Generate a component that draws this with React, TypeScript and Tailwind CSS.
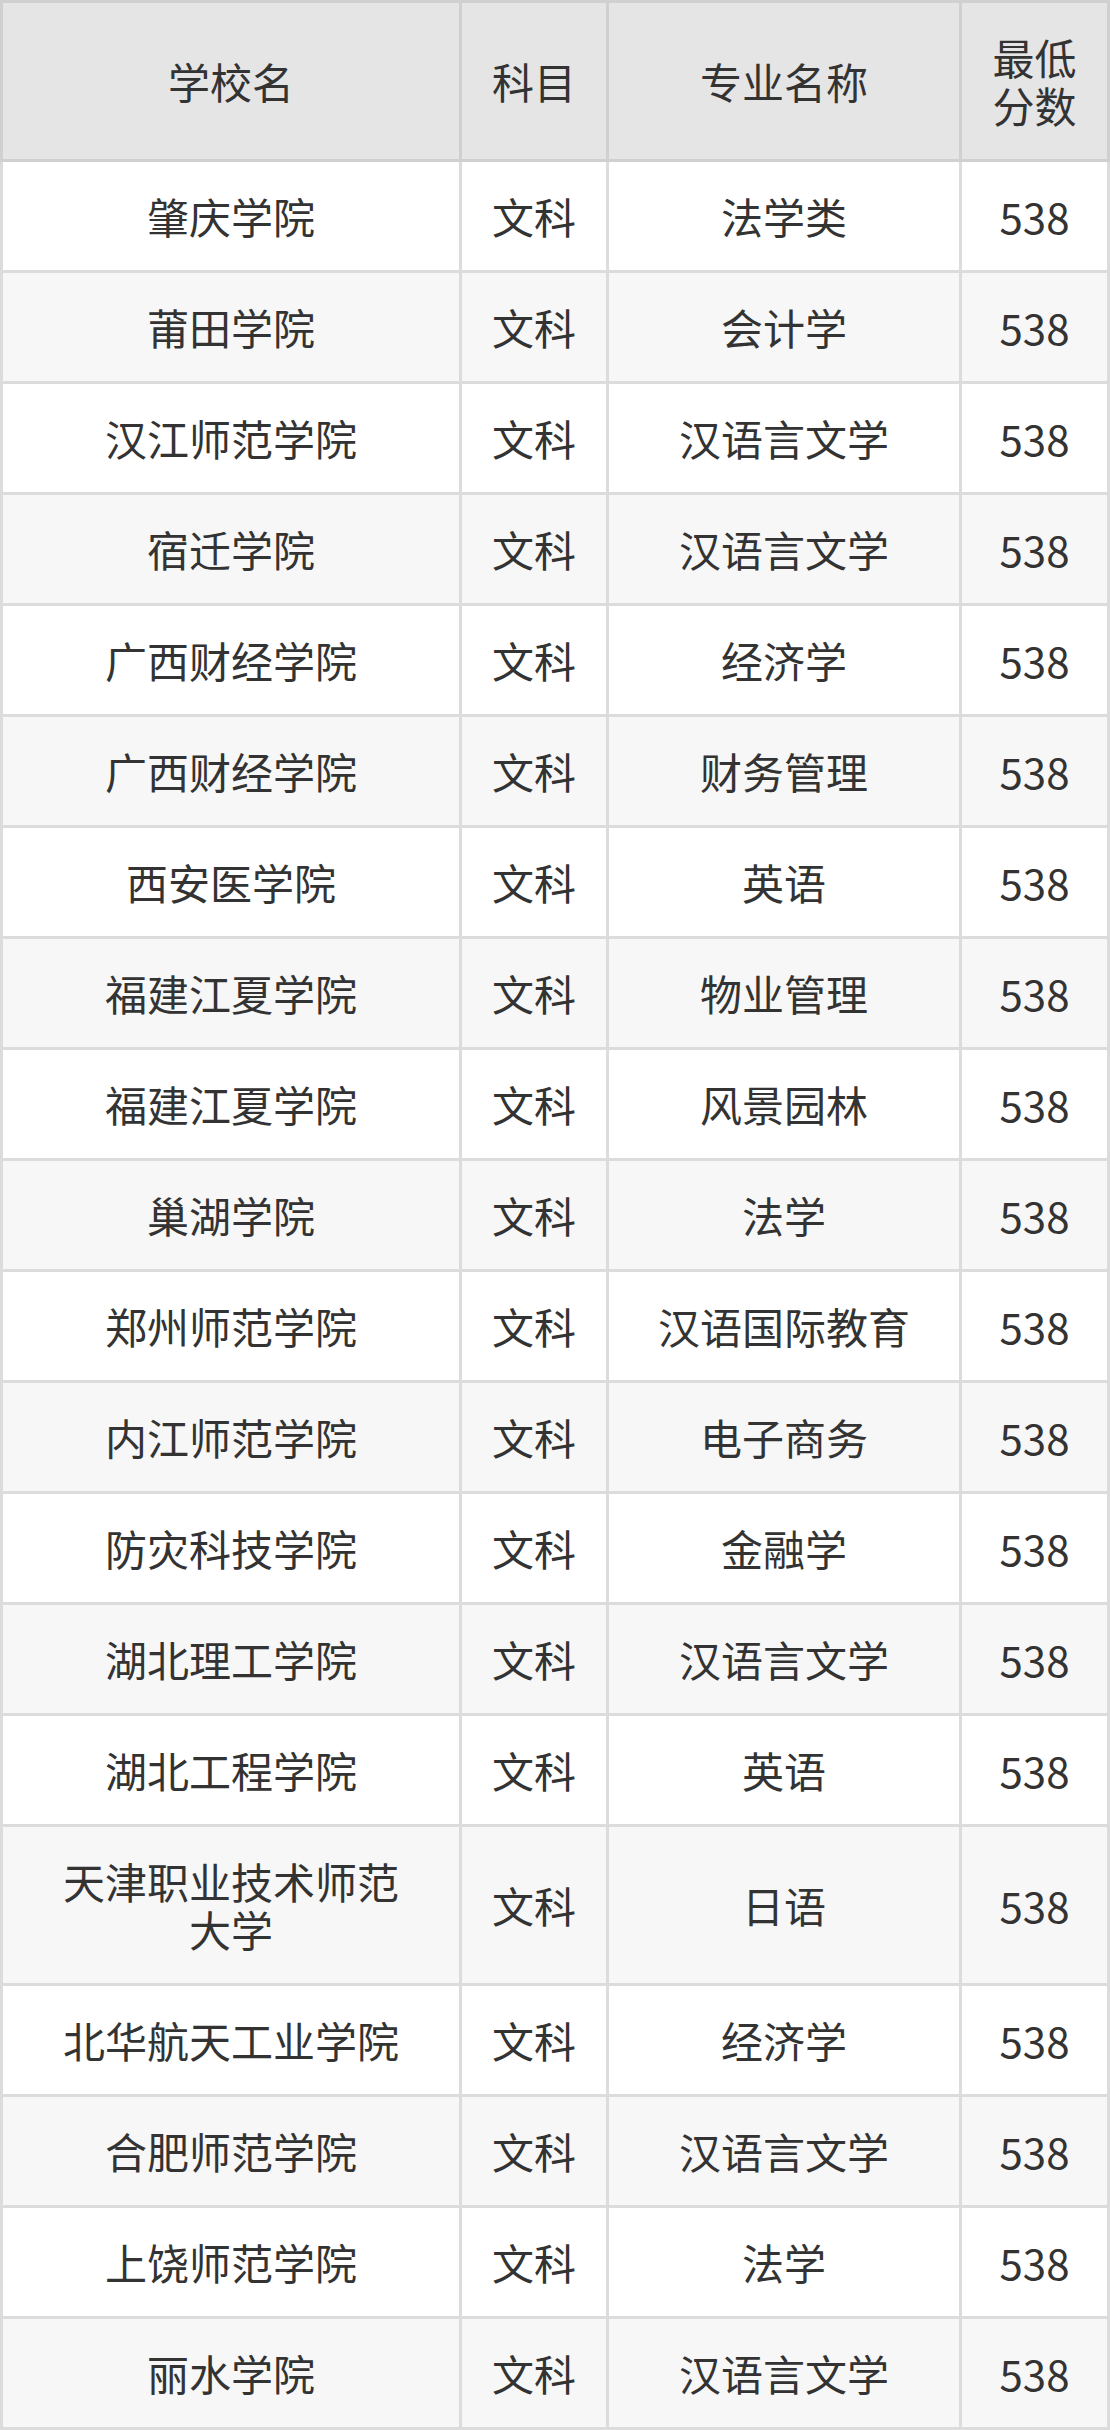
const rows: [string, string, string, string][] = [
  ['肇庆学院', '文科', '法学类', '538'],
  ['莆田学院', '文科', '会计学', '538'],
  ['汉江师范学院', '文科', '汉语言文学', '538'],
  ['宿迁学院', '文科', '汉语言文学', '538'],
  ['广西财经学院', '文科', '经济学', '538'],
  ['广西财经学院', '文科', '财务管理', '538'],
  ['西安医学院', '文科', '英语', '538'],
  ['福建江夏学院', '文科', '物业管理', '538'],
  ['福建江夏学院', '文科', '风景园林', '538'],
  ['巢湖学院', '文科', '法学', '538'],
  ['郑州师范学院', '文科', '汉语国际教育', '538'],
  ['内江师范学院', '文科', '电子商务', '538'],
  ['防灾科技学院', '文科', '金融学', '538'],
  ['湖北理工学院', '文科', '汉语言文学', '538'],
  ['湖北工程学院', '文科', '英语', '538'],
  ['天津职业技术师范大学', '文科', '日语', '538'],
  ['北华航天工业学院', '文科', '经济学', '538'],
  ['合肥师范学院', '文科', '汉语言文学', '538'],
  ['上饶师范学院', '文科', '法学', '538'],
  ['丽水学院', '文科', '汉语言文学', '538'],
];

const cols = 'grid grid-cols-[456px_144px_350px_145px] gap-[3px]';
const cell = 'flex items-center justify-center text-center leading-[48px]';

export default function App() {
  return (
    <div
      className="w-[1110px] text-[42px] text-[#333333]"
      style={{ fontFamily: '"Noto Sans CJK SC", "Noto Sans", sans-serif' }}
    >
      <div className={`${cols} bg-[#d0d0d0] p-[3px]`}>
        <div className={`${cell} h-[156px] bg-[#e5e5e5] px-10`}>学校名</div>
        <div className={`${cell} h-[156px] bg-[#e5e5e5] px-3`}>科目</div>
        <div className={`${cell} h-[156px] bg-[#e5e5e5] px-3`}>专业名称</div>
        <div className={`${cell} h-[156px] bg-[#e5e5e5] px-3`}>最低分数</div>
      </div>
      <div className={`${cols} bg-[#dcdcdc] px-[3px] pb-[3px]`}>
        {rows.map((r, i) => {
          const bg = i % 2 === 0 ? 'bg-white' : 'bg-[#f7f7f7]';
          const h = r[0].length > 8 ? 'min-h-[156px]' : 'min-h-[108px]';
          return [
            <div key={`${i}a`} className={`${cell} ${h} ${bg} px-10`}>{r[0]}</div>,
            <div key={`${i}b`} className={`${cell} ${h} ${bg} px-3`}>{r[1]}</div>,
            <div key={`${i}c`} className={`${cell} ${h} ${bg} px-3`}>{r[2]}</div>,
            <div key={`${i}d`} className={`${cell} ${h} ${bg} px-3`}>{r[3]}</div>,
          ];
        })}
      </div>
    </div>
  );
}
